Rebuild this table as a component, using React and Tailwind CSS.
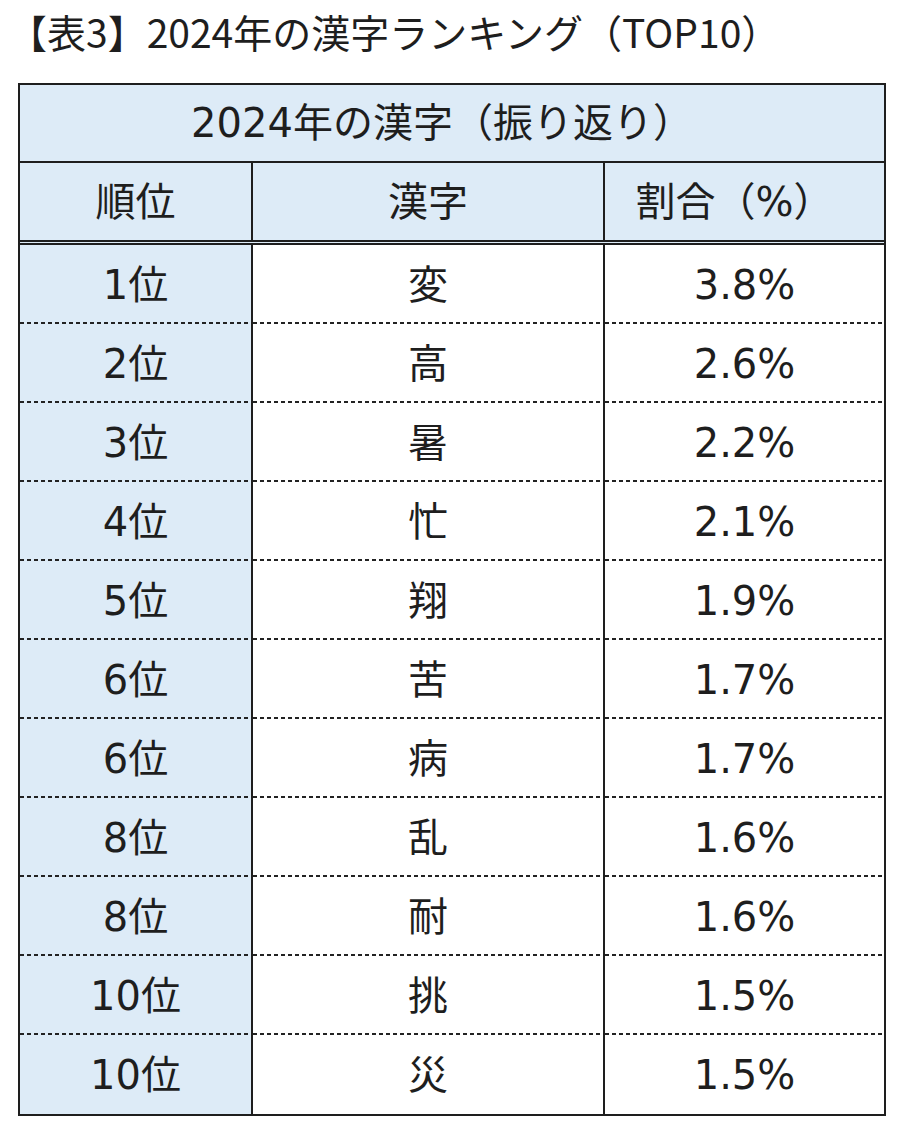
const ROWS = [
  ["1位", "変", "3.8%"],
  ["2位", "高", "2.6%"],
  ["3位", "暑", "2.2%"],
  ["4位", "忙", "2.1%"],
  ["5位", "翔", "1.9%"],
  ["6位", "苦", "1.7%"],
  ["6位", "病", "1.7%"],
  ["8位", "乱", "1.6%"],
  ["8位", "耐", "1.6%"],
  ["10位", "挑", "1.5%"],
  ["10位", "災", "1.5%"],
];

const FONT = "font-['DejaVu_Sans','Noto_Sans_CJK_JP',sans-serif]";
const DASH =
  "bg-[repeating-linear-gradient(90deg,#222_0_4px,transparent_4px_7px)] bg-no-repeat bg-bottom bg-[length:100%_2px]";

export default function App() {
  return (
    <div className={`w-[900px] h-[1132px] bg-white text-[#1e1e1e] ${FONT}`}>
      <div className="pl-[8px] pt-[6px] h-[83px] text-[39px] leading-[50px] font-['Noto_Sans_CJK_JP',sans-serif]">
        【表3】2024年の漢字ランキング（TOP10）
      </div>

      <div className="ml-[18px] w-[868px] border-2 border-[#1e1e1e]">
        <div className="h-[78px] flex items-center justify-center bg-[#ddebf7] border-b-2 border-[#1e1e1e] text-[40px] pr-[20px]">
          2024年の漢字（振り返り）
        </div>
        <div className="grid grid-cols-[233px_352px_1fr] h-[82px] bg-[#ddebf7] border-b-[5px] border-double border-[#1e1e1e] text-[40px]">
          <div className="flex items-center justify-center border-r-2 border-[#1e1e1e]">順位</div>
          <div className="flex items-center justify-center border-r-2 border-[#1e1e1e]">漢字</div>
          <div className="flex items-center justify-center pr-[20px]">割合（%）</div>
        </div>
        {ROWS.map(([rank, kanji, pct], i) => {
          const last = i === ROWS.length - 1;
          return (
            <div key={i} className="grid grid-cols-[233px_352px_1fr] h-[79px] text-[40px]">
              <div className={`flex items-center justify-center bg-[#ddebf7] border-r-2 border-[#1e1e1e] ${last ? "" : DASH}`}>
                {rank}
              </div>
              <div className={`flex items-center justify-center border-r-2 border-[#1e1e1e] ${last ? "" : DASH}`}>
                {kanji}
              </div>
              <div className={`flex items-center justify-center ${last ? "" : DASH}`}>{pct}</div>
            </div>
          );
        })}
      </div>
    </div>
  );
}
